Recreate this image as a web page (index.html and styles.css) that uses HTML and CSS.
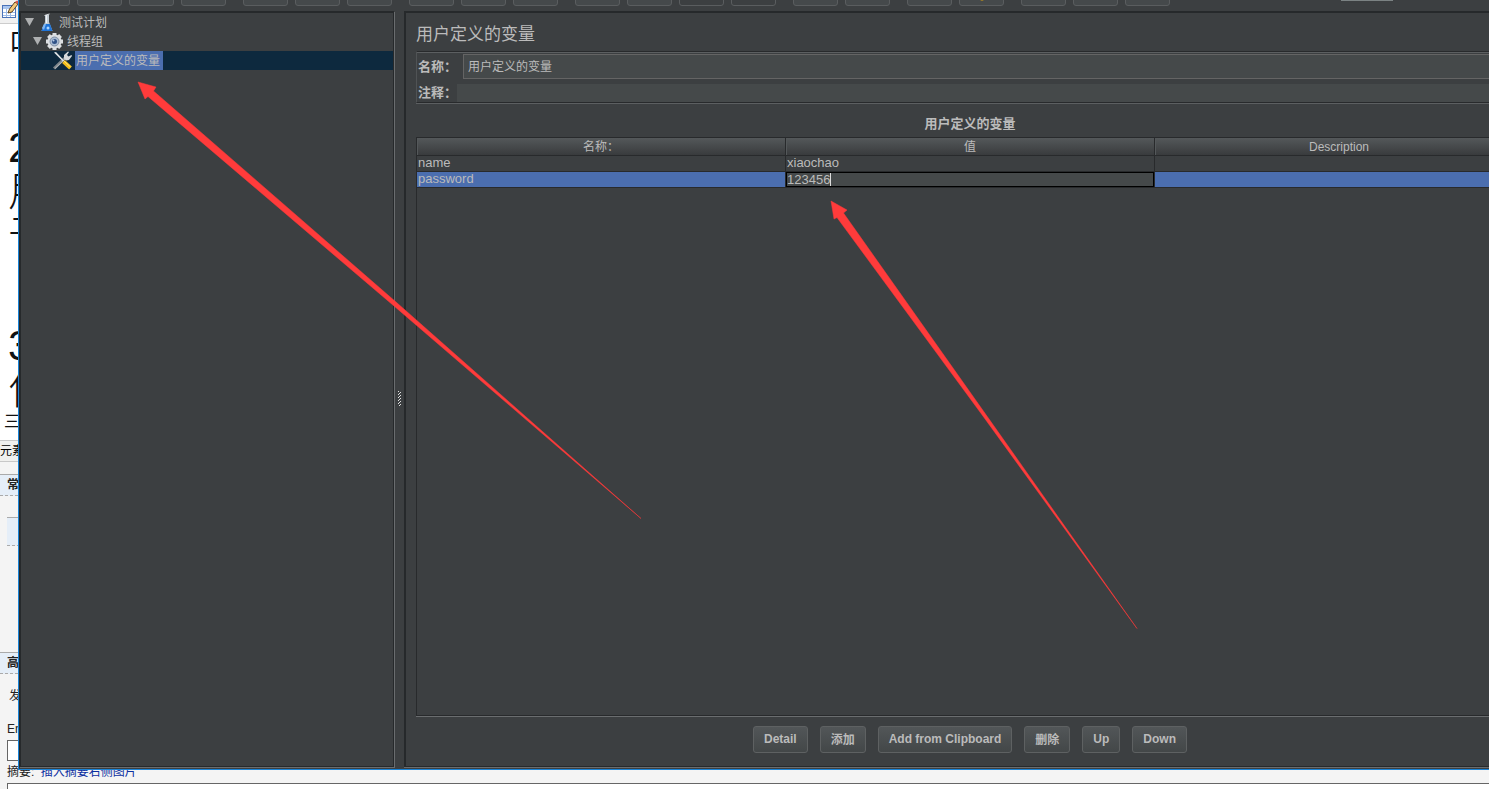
FILE: index.html
```
<!DOCTYPE html>
<html lang="zh-CN">
<head>
<meta charset="UTF-8">
<title>用户定义的变量</title>
<link rel="stylesheet" href="styles.css">
</head>
<body>

    <!-- blog editor behind the window -->
    <div class="editor">
        <div class="editor-bar">
            <svg width="18" height="20" viewBox="0 0 18 20">
                <rect x="2.500" y="5.500" width="13" height="12" fill="#fff" stroke="#4a72b8"/>
                <rect x="3" y="6" width="12" height="3" fill="#a9c5ee"/>
                <path d="M3 12.500h12M3 15.500h12M6.500 9v8M10.500 9v8" stroke="#9dbbe6" fill="none"/>
                <path d="M8 13l1.500-4L15 2l3 2-6 8z" fill="#f2c879" stroke="#5b4320"/>
                <path d="M15 2l2-1.500L18 1v3z" fill="#d9534a"/>
            </svg>
        </div>
        <div class="editor-text">
            <p>中</p>
            <p class="step">2</p>
            <p>用</p>
            <p>于</p>
            <p class="step last">3</p>
            <p>作</p>
            <p class="small">三</p>
        </div>
        <div class="editor-path">元素</div>
        <h4 class="editor-head">常</h4>
        <div class="editor-box"></div>
        <h4 class="editor-head">高</h4>
        <p class="editor-opt">发</p>
        <label class="editor-label" for="entry">En</label>
        <input class="editor-entry" id="entry" type="text">
        <div class="editor-summary"><label for="summary">摘要:</label> <a href="#">插入摘要右侧图片</a></div>
        <textarea class="editor-area" id="summary"></textarea>
    </div>

    <div class="window">
        <div class="toolbar">
            <button type="button"></button>
            <button type="button"></button>
            <button type="button"></button>
            <button type="button"></button>
            <i class="sep"></i>
            <button type="button"></button>
            <button type="button"><svg width="12" height="6"><path d="M0 0h12v1H0z" fill="#a3a59f"/></svg></button>
            <button type="button"></button>
            <i class="sep"></i>
            <button type="button"></button>
            <button type="button"></button>
            <button type="button"></button>
            <i class="sep"></i>
            <button type="button"></button>
            <button type="button"></button>
            <button type="button" class="dark"><svg width="12" height="6"><path d="M0 0h12v1H0z" fill="#a8aaa8"/></svg></button>
            <button type="button" class="dark"></button>
            <i class="sep"></i>
            <button type="button"><svg width="6" height="6"><path d="M0 0h5v1H0z" fill="#a58a66"/></svg></button>
            <button type="button"><svg width="12" height="6"><path d="M0 0h5v1H0zM7 0h5v1H7z" fill="#a58a66"/></svg></button>
            <i class="sep"></i>
            <button type="button"></button>
            <button type="button"><svg width="8" height="6"><path d="M0 0h8L4 2z" fill="#a98420"/></svg></button>
            <i class="sep"></i>
            <button type="button"><svg width="14" height="6"><path d="M0 0h14v1H0z" fill="#26282a"/></svg></button>
            <button type="button"><svg width="14" height="6"><path d="M0 0h14v1H0z" fill="#3c5f96"/></svg></button>
            <button type="button"></button>
            <i class="status"></i>
        </div>

        <div class="split">
            <ul class="tree">
                <li class="node">
                    <svg class="arrow" width="9" height="9"><path d="M0 0h9L4.500 8z" fill="#aeb0b1"/></svg>
                    <svg class="icon" viewBox="0 0 20 19">
                        <path d="M8 2h4v7l3.500 9h-11L8 9z" fill="#c3ccd4"/>
                        <path d="M7 11h6l2.500 7h-11z" fill="#1f74d8"/>
                        <path d="M9 2h1v8H9z" fill="#f2f5f7"/>
                        <path d="M5 15l2-4h2l-2 6z" fill="#7fb6f2"/>
                        <circle cx="11" cy="15" r="1.500" fill="#a8d4ff"/>
                        <path d="M7.500 2.500l5-1.500" stroke="#dfe4e8"/>
                    </svg>
                    <span class="label">测试计划</span>
                </li>
                <li class="node depth1">
                    <svg class="arrow" width="9" height="9"><path d="M0 0h9L4.500 8z" fill="#aeb0b1"/></svg>
                    <svg class="icon" viewBox="0 0 20 19">
                        <g fill="#dcdfe2">
                            <rect x="7.500" y="1" width="4" height="17"/>
                            <rect x="7.500" y="1" width="4" height="17" transform="rotate(45 9.500 9.500)"/>
                            <rect x="7.500" y="1" width="4" height="17" transform="rotate(90 9.500 9.500)"/>
                            <rect x="7.500" y="1" width="4" height="17" transform="rotate(135 9.500 9.500)"/>
                            <circle cx="9.500" cy="9.500" r="7"/>
                        </g>
                        <circle cx="9.500" cy="9.500" r="4.500" fill="#a9bbd2" stroke="#8190a6"/>
                        <circle cx="9.500" cy="9.500" r="2.500" fill="#2f5186"/>
                        <circle cx="8.500" cy="8.500" r="1" fill="#b9cbe4"/>
                    </svg>
                    <span class="label">线程组</span>
                </li>
                <li class="node depth2 selected">
                    <svg class="icon" viewBox="0 0 20 19">
                        <path d="M1 17.500L13 6" stroke="#7d8489" stroke-width="3"/>
                        <path d="M2 17.500L13 7" stroke="#b9bec2"/>
                        <path d="M11 7.500V4l4-3.500 1 .5-2 3 1.500 1.500L18.500 4l.5 1-3 4-3 .5z" fill="#d5d8da"/>
                        <path d="M1 1.500l2-.5 8 8.500-1 1z" fill="#e4e6e7"/>
                        <path d="M10.500 10.500l7 6.500" stroke="#f4bf1a" stroke-width="4"/>
                        <path d="M11 10l6.500 6" stroke="#ffe27a"/>
                    </svg>
                    <span class="label">用户定义的变量</span>
                </li>
            </ul>

            <div class="divider">
                <svg width="5" height="17">
                    <path d="M1 1.500h1M3 2.500h1M1 4.500h1M3 5.500h1M1 7.500h1M3 8.500h1M1 10.500h1M3 11.500h1M1 13.500h1M3 14.500h1M2 3.500h1M2 6.500h1M2 9.500h1M2 12.500h1M2 15.500h1" stroke="#e0e0e0" fill="none"/>
                </svg>
            </div>

            <div class="detail">
                <h1>用户定义的变量</h1>

                <form class="fields">
                    <div class="field">
                        <label for="name">名称：</label>
                        <input id="name" type="text" value="用户定义的变量">
                    </div>
                    <div class="field comment">
                        <label for="comment">注释：</label>
                        <input id="comment" type="text">
                    </div>
                </form>

                <h2>用户定义的变量</h2>

                <div class="table-box">
                    <table>
                        <thead>
                            <tr><th>名称：</th><th>值</th><th>Description</th></tr>
                        </thead>
                        <tbody>
                            <tr><td>name</td><td>xiaochao</td><td></td></tr>
                            <tr class="selected">
                                <td>password</td>
                                <td class="editing"><div class="cell"><input type="text" value="123456" size="6" aria-label="值"></div></td>
                                <td></td>
                            </tr>
                        </tbody>
                    </table>
                </div>

                <div class="buttons">
                    <button type="button">Detail</button>
                    <button type="button">添加</button>
                    <button type="button">Add from Clipboard</button>
                    <button type="button">删除</button>
                    <button type="button">Up</button>
                    <button type="button">Down</button>
                </div>
            </div>
        </div>
    </div>

    <!-- red marker arrows -->
    <svg class="marks" width="1489" height="789">
        <path d="M138 82L156 87L153.500 91L396 302L641 518.500L394 306L148 96.500L145 99z"/>
        <path d="M831 201L847 210L843.500 213L1137 628.500L980 412L837 217.500L834 219z"/>
    </svg>

</body>
</html>
```
FILE: styles.css
```
* {
    box-sizing: border-box;
}
body {
    margin: 0;
    height: 100vh;
    position: relative;
    overflow: hidden;
    background: #f4f4f4;
    font: 12px "Liberation Sans", "Noto Sans CJK SC", sans-serif;
}
h1, h2, h4, p, ul {
    margin: 0;
    padding: 0;
}
svg {
    display: block;
}

/* editor page */
.editor {
    height: 100%;
    display: flex;
    flex-direction: column;
    color: #222;
    line-height: 20px;
}
.editor-bar {
    height: 24px;
    background: #f0f0f0;
    border-bottom: 1px solid #ccc;
}
.editor-text {
    height: 416px;
    padding-left: 8px;
    background: #fff;
    color: #111;
    font-size: 42px;
    font-weight: 300;
    line-height: 44px;
}
.editor-text .step {
    margin-top: 58px;
}
.editor-text .last {
    margin-top: 66px;
}
.editor-text .small {
    margin-left: -4px;
    font-size: 16px;
    font-weight: normal;
    line-height: 20px;
}
.editor-path {
    height: 22px;
    background: #f0f0ee;
    border-top: 1px solid #c8c8c8;
    border-bottom: 1px solid #c8c8c8;
    color: #000;
}
.editor-head {
    height: 22px;
    margin-top: 12px;
    padding-left: 7px;
    background: #e5eef8;
    border-top: 1px solid #aaa;
    border-bottom: 1px dashed #aaa;
    font-size: 12px;
}
.editor-box {
    height: 29px;
    margin: 21px 0 94px 7px;
    background: #e5eef8;
    border-top: 1px solid #aaa;
    border-bottom: 1px dashed #aaa;
}
.editor-opt {
    padding: 12px 0 12px 9px;
}
.editor-label {
    padding: 1px 0 0 7px;
}
.editor-entry {
    width: 200px;
    height: 21px;
    margin: 1px 0 0 7px;
    background: #fff;
    border: 1px solid #666;
}
.editor-summary {
    padding: 1px 0 0 7px;
}
.editor-summary a {
    margin-left: 3px;
    color: #0b2fa0;
    text-decoration: none;
}
.editor-area {
    flex: 1;
    min-height: 0;
    margin: 1px 0 0 7px;
    padding: 0;
    background: #fff;
    border: 1px solid #666;
    border-width: 1px 0 0 1px;
    resize: none;
}

/* application window, runs off the right edge */
.window {
    position: absolute;
    top: 0;
    left: 18px;
    right: -46px;
    bottom: 19px;
    display: flex;
    flex-direction: column;
    overflow: hidden;
    padding-bottom: 1px;
    background: #3c3f41;
    border-left: 1px solid #1883d7;
    border-bottom: 1px solid #1883d7;
    color: #bbb;
}
.toolbar {
    flex: none;
    display: flex;
    align-items: flex-end;
    gap: 7px;
    height: 11px;
    padding: 0 0 5px 6px;
}
.toolbar button {
    flex: none;
    display: flex;
    align-items: flex-end;
    justify-content: center;
    width: 45px;
    height: 30px;
    padding: 0;
    background: #45494b;
    border: 1px solid #5a5d5f;
    border-radius: 3px;
}
.toolbar .dark {
    background: #3c3f41;
}
.toolbar .sep {
    width: 3px;
}
.toolbar .status {
    width: 52px;
    height: 6px;
    margin-left: 164px;
    border-top: 1px solid #7b8283;
}
.split {
    flex: 1;
    min-height: 0;
    display: flex;
}

.tree {
    flex: none;
    width: 375px;
    margin: 0 1px 1px 0;
    list-style: none;
    border: 1px solid #26292b;
    border-width: 2px 1px 1px 2px;
    box-shadow: 1px 1px 0 #6a6d6f;
}
.node {
    display: flex;
    align-items: center;
    height: 19px;
    padding-left: 4px;
}
.depth1 {
    padding-left: 12px;
}
.depth2 {
    padding-left: 32px;
}
.node.selected {
    background: #0d293e;
}
.node .icon {
    width: 20px;
    height: 19px;
    margin: 0 1px 0 3px;
}
.depth2 .icon {
    margin: 0 2px 0 0;
}
.label {
    padding: 2px 3px 0 1px;
    line-height: 17px;
}
.selected .label {
    background: #4b6eaf;
}

.divider {
    flex: none;
    display: flex;
    align-items: center;
    justify-content: center;
    width: 9px;
    padding-top: 18px;
}

.detail {
    flex: 1;
    display: flex;
    flex-direction: column;
    margin-bottom: 1px;
    padding: 12px 11px 0 10px;
    border: 1px solid #26292b;
    border-width: 2px 0 1px 2px;
    box-shadow: 0 1px 0 #6a6d6f;
}
h1 {
    margin-bottom: 6px;
    font-size: 17px;
    font-weight: normal;
    line-height: 20px;
}
.fields {
    display: flex;
    flex-direction: column;
    gap: 5px;
    padding: 2px 0 0 1px;
    border: 1px solid #282a2c;
    border-left-color: #505355;
    box-shadow: inset 0 1px 0 #5c5f61, 0 1px 0 #5c5f61;
}
.field {
    display: flex;
    align-items: center;
    gap: 6px;
}
.field label {
    width: 39px;
    font-size: 13px;
    font-weight: bold;
    line-height: 18px;
}
.field input {
    flex: 1;
    height: 25px;
    padding: 0 4px 2px;
    background: #45494a;
    border: 1px solid #646464;
    color: #bbb;
    font: inherit;
}
.comment {
    gap: 0;
}
.comment input {
    height: 18px;
    border: 0;
}
h2 {
    padding: 11px 0 3px;
    font-size: 13px;
    line-height: 20px;
    text-align: center;
}
.table-box {
    flex: 1;
    border: 1px solid #282a2c;
    border-right: 0;
    box-shadow: 0 1px 0 #6a6d6f;
}
table {
    width: 100%;
    table-layout: fixed;
    border-collapse: separate;
    border-spacing: 0;
}
th {
    height: 18px;
    padding: 2px 0 0;
    background: linear-gradient(#54585a, #393b3d);
    border-right: 1px solid #282a2c;
    border-bottom: 1px solid #282a2c;
    box-shadow: inset 1px 0 0 #54585a;
    font-weight: normal;
    line-height: 15px;
}
td {
    height: 16px;
    padding: 0 1px 1px;
    border-right: 1px solid #282a2c;
    border-bottom: 1px solid #282a2c;
    font-size: 13px;
    line-height: 14px;
}
tr.selected td {
    background: #4b6eaf;
}
tr.selected td.editing {
    padding: 0;
}
.cell {
    display: flex;
    height: 15px;
    background: #45494a;
    border: 1px solid #000;
}
.cell input {
    width: 44px;
    height: 13px;
    padding: 0;
    background: none;
    border: 0;
    border-right: 1px solid #ddd;
    color: #bbb;
    font: inherit;
}
.buttons {
    display: flex;
    justify-content: center;
    gap: 12px;
    padding: 10px 0 13px;
}
.buttons button {
    height: 27px;
    padding: 0 10px 2px;
    background: linear-gradient(#525658, #434748);
    border: 1px solid #5e6162;
    border-radius: 3px;
    color: #bbb;
    font: bold 12px "Liberation Sans", "Noto Sans CJK SC", sans-serif;
}

.marks {
    position: absolute;
    top: 0;
    left: 0;
    fill: #ff3b3b;
    stroke: #ff3b3b;
    stroke-width: .5;
    pointer-events: none;
}
```
